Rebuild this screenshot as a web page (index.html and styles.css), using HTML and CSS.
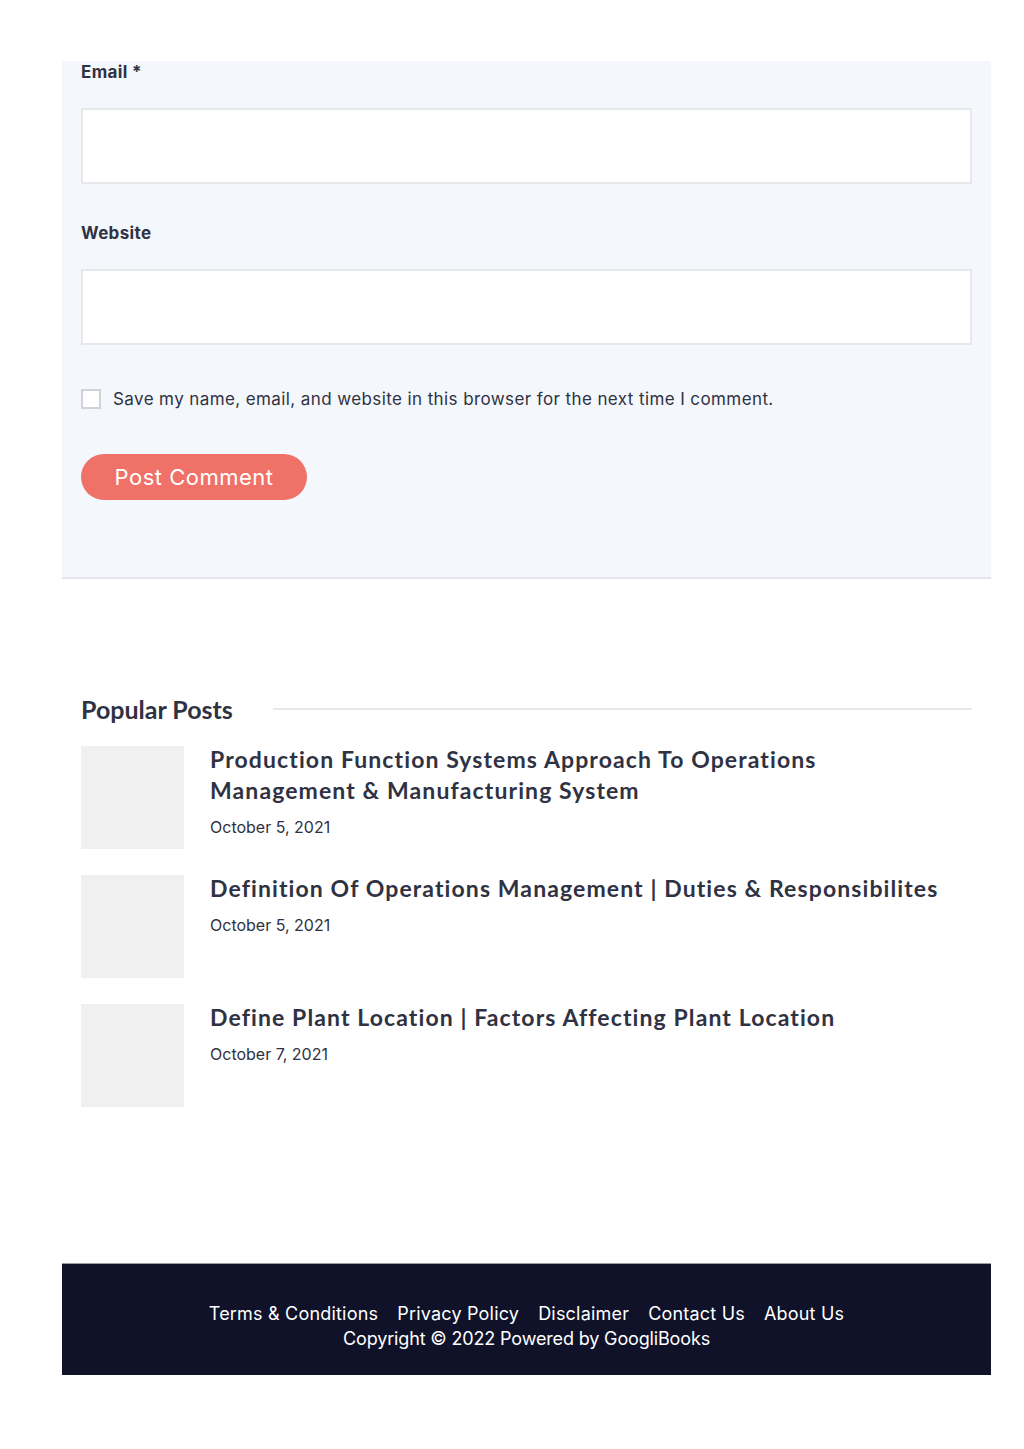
FILE: index.html
```html
<!DOCTYPE html>
<html lang="en">
<head>
    <meta charset="UTF-8">
    <meta name="viewport" content="width=device-width, initial-scale=1.0">
    <title>Leave a Comment</title>
    <link rel="stylesheet" href="styles.css">
</head>
<body>
    <div class="page">
        <div class="comment-box">
            <form class="comment-form">
                <label class="field-label" for="email">Email *</label>
                <input type="email" id="email" class="field-input">

                <label class="field-label" for="url">Website</label>
                <input type="text" id="url" class="field-input">

                <div class="consent">
                    <input type="checkbox" id="consent" class="consent-box">
                    <label for="consent">Save my name, email, and website in this browser for the next time I comment.</label>
                </div>

                <button type="button" class="submit">Post Comment</button>
            </form>
        </div>

        <section class="popular">
            <div class="popular-head">
                <h2>Popular Posts</h2>
                <span class="popular-line"></span>
            </div>

            <div class="post">
                <div class="thumb"></div>
                <div class="post-info">
                    <h3>Production Function Systems Approach To Operations Management &amp; Manufacturing System</h3>
                    <span class="post-date">October 5, 2021</span>
                </div>
            </div>
            <div class="post">
                <div class="thumb"></div>
                <div class="post-info">
                    <h3>Definition Of Operations Management | Duties &amp; Responsibilites</h3>
                    <span class="post-date">October 5, 2021</span>
                </div>
            </div>
            <div class="post">
                <div class="thumb"></div>
                <div class="post-info">
                    <h3>Define Plant Location | Factors Affecting Plant Location</h3>
                    <span class="post-date">October 7, 2021</span>
                </div>
            </div>
        </section>

        <footer class="footer">
            <nav class="footer-links">
                <a href="#">Terms &amp; Conditions</a>
                <a href="#">Privacy Policy</a>
                <a href="#">Disclaimer</a>
                <a href="#">Contact Us</a>
                <a href="#">About Us</a>
            </nav>
            <p class="copyright">Copyright © 2022 Powered by GoogliBooks</p>
        </footer>
    </div>
</body>
</html>
```

FILE: styles.css
```css
body {
    margin: 0;
    background-color: #ffffff;
    font-family: 'Inter', 'Open Sans', sans-serif;
    color: #2f3243;
}
.page {
    width: 929px;
    margin-left: 62px;
    padding-top: 61px;
    padding-bottom: 75px;
}
.comment-box {
    background-color: #f4f7fc;
    border-bottom: 2px solid #e4e6eb;
    padding: 0 19px 77px;
}
.comment-form {
    display: flex;
    flex-direction: column;
    align-items: flex-start;
}
.field-label {
    font-size: 17px;
    font-weight: 700;
    line-height: 22px;
    letter-spacing: 0.35px;
    margin-bottom: 25px;
}
.field-input {
    box-sizing: border-box;
    width: 100%;
    height: 76px;
    border: 2px solid #e6e8ec;
    background-color: #ffffff;
    margin: 0 0 38px;
}
.field-input:last-of-type {
    margin-bottom: 43px;
}
.consent {
    display: flex;
    align-items: center;
    gap: 12px;
    font-size: 17px;
    line-height: 22px;
    letter-spacing: 0.4px;
}
.consent-box {
    appearance: none;
    width: 20px;
    height: 20px;
    margin: 0;
    border: 2px solid #cfd3d9;
    background-color: #ffffff;
}
.submit {
    margin-top: 44px;
    width: 226px;
    height: 46px;
    border: none;
    border-radius: 23px;
    background-color: #f07167;
    color: #ffffff;
    font-family: inherit;
    font-size: 22px;
    letter-spacing: 0.5px;
    cursor: pointer;
}
.popular {
    padding: 115px 19px 0;
}
.popular-head {
    display: flex;
    align-items: center;
    gap: 40px;
    margin-bottom: 22px;
}
.popular-head h2 {
    margin: 0;
    font-family: 'Lato', sans-serif;
    font-size: 25px;
    font-weight: 700;
    line-height: 30px;
}
.popular-line {
    flex: 1;
    height: 2px;
    background-color: #e6e8ec;
}
.post {
    display: flex;
    gap: 26px;
    margin-bottom: 26px;
}
.thumb {
    flex: none;
    width: 103px;
    height: 103px;
    background-color: #f0f0f0;
}
.post-info {
    padding-right: 20px;
}
.post-info h3 {
    margin: -2px 0 10px;
    font-family: 'Lato', sans-serif;
    font-size: 23px;
    font-weight: 700;
    line-height: 31px;
    letter-spacing: 1.1px;
}
.post-date {
    font-size: 16px;
    line-height: 22px;
}
.footer {
    margin-top: 156px;
    background-color: #0f1229;
    border-top: 1px solid #9a9ca6;
    padding: 37px 0 24px;
    text-align: center;
    color: #ffffff;
    font-size: 18px;
    line-height: 25px;
}
.footer-links {
    display: flex;
    justify-content: center;
    gap: 19px;
    letter-spacing: 0.2px;
}
.footer-links a {
    color: #ffffff;
    text-decoration: none;
}
.copyright {
    margin: 0;
    letter-spacing: -0.15px;
}
```
